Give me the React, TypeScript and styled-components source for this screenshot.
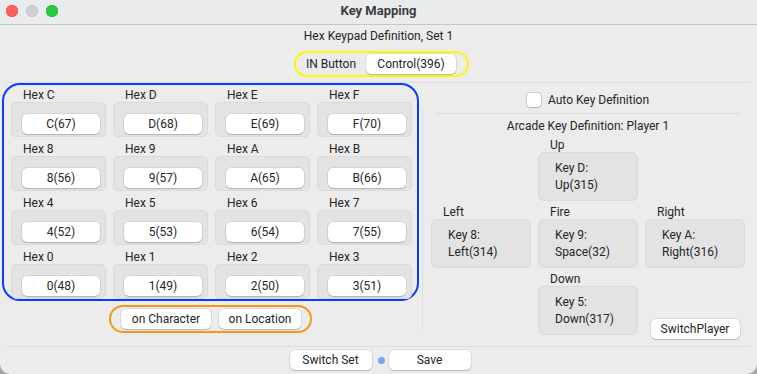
import React from "react";
import styled, { createGlobalStyle } from "styled-components";

const FONT = `Roboto, "Liberation Sans", sans-serif`;

const Global = createGlobalStyle`
  html, body { margin: 0; padding: 0; background: #a3a3a3; }
  body {
    font-family: ${FONT};
    font-size: 12px;
    color: #262626;
  }
  * { box-sizing: border-box; }
`;

const Window = styled.div`
  width: 757px;
  height: 374px;
  background: #ececec;
  display: flex;
  flex-direction: column;
  border-radius: 0 0 10px 10px;
  overflow: hidden;
`;

const TitleBar = styled.div`
  height: 25px;
  flex: none;
  display: grid;
  grid-template-columns: 1fr auto 1fr;
  align-items: center;
  background: #eaebec;
  border-bottom: 1px solid #c6c6c6;
`;

const Lights = styled.div`
  display: flex;
  gap: 8px;
  padding-left: 6px;
  padding-bottom: 3px;
`;

const Light = styled.span<{ $c: string; $b: string }>`
  width: 12px;
  height: 12px;
  border-radius: 50%;
  background: ${(p) => p.$c};
  box-shadow: inset 0 0 0 0.5px ${(p) => p.$b};
`;

const Title = styled.div`
  font-weight: 700;
  font-size: 13px;
  color: #3d3d3d;
  padding-bottom: 3px;
`;

const Header = styled.div`
  margin-top: 4px;
  line-height: 14px;
  text-align: center;
`;

const HeaderRow = styled.div`
  display: flex;
  justify-content: center;
  margin-top: 8px;
  padding-left: 6px;
`;

const Ring = styled.div<{ $color: string; $radius: number }>`
  border: 2px solid ${(p) => p.$color};
  border-radius: ${(p) => p.$radius}px;
`;

const InRing = styled(Ring)`
  height: 26px;
  display: flex;
  align-items: center;
  padding: 0 11px 0 10px;
  gap: 10px;
`;

const Separator = styled.div<{ $ml?: number; $mr?: number }>`
  height: 1px;
  background: #dcdcdc;
  margin-left: ${(p) => p.$ml ?? 0}px;
  margin-right: ${(p) => p.$mr ?? 0}px;
  flex: none;
`;

const TopSep = styled(Separator)`
  margin-top: 5px;
`;

const Button = styled.button<{ $w: number }>`
  all: unset;
  box-sizing: border-box;
  width: ${(p) => p.$w}px;
  height: 20px;
  background: #fff;
  border-radius: 5px;
  box-shadow: 0 0 0 0.5px rgba(0, 0, 0, 0.14), 0 1px 1px rgba(0, 0, 0, 0.16);
  font-family: ${FONT};
  font-size: 12px;
  color: #262626;
  text-align: center;
  line-height: 20px;
  flex: none;
`;

const Main = styled.div`
  flex: 1;
  display: flex;
  align-items: flex-start;
`;

const LeftCol = styled.div`
  padding-left: 2px;
  width: 419px;
  display: flex;
  flex-direction: column;
  align-items: center;
  gap: 4px;
`;

const HexRing = styled(Ring)`
  width: 417px;
  padding: 3px 4px 0 7px;
  display: grid;
  grid-template-columns: repeat(4, 95px);
  column-gap: 7px;
  row-gap: 5px;
`;

const Cell = styled.div<{ $col?: number }>`
  display: flex;
  flex-direction: column;
  grid-column: ${(p) => p.$col ?? "auto"};
`;

const CellLabel = styled.div<{ $indent: number }>`
  line-height: 14px;
  height: 14px;
  padding-left: ${(p) => p.$indent}px;
`;

const HexBox = styled.div`
  height: 35px;
  background: #e3e3e3;
  border: 1px solid #dadada;
  border-radius: 5px;
  display: flex;
  align-items: flex-end;
  padding: 0 5px 2px 10px;
`;

const ModeRing = styled(Ring)`
  display: flex;
  gap: 8px;
  padding: 2px 9px 2px 10px;
`;

const VSep = styled.div`
  width: 1px;
  height: 222px;
  margin: 24px 0 0 3px;
  background: #dcdcdc;
  flex: none;
`;

const RightCol = styled.div`
  margin-left: 8px;
  width: 314px;
  padding-top: 9px;
  display: flex;
  flex-direction: column;
`;

const CheckRow = styled.label`
  height: 16px;
  display: flex;
  align-items: center;
  justify-content: center;
  gap: 7px;
`;

const CheckBox = styled.span`
  width: 14px;
  height: 14px;
  background: #fff;
  border-radius: 3px;
  box-shadow: 0 0 0 0.5px rgba(0, 0, 0, 0.25), 0 0.5px 1px rgba(0, 0, 0, 0.15);
`;

const RightSep = styled(Separator)`
  margin-top: 5px;
`;

const ArcadeTitle = styled.div`
  margin-top: 5px;
  line-height: 14px;
  text-align: center;
`;

const ArcadeGrid = styled.div`
  margin-top: 5px;
  display: grid;
  grid-template-columns: repeat(3, 100px);
  column-gap: 7px;
  row-gap: 4px;
`;

const KeyBox = styled.div`
  height: 49px;
  background: #e3e3e3;
  border: 1px solid #dadada;
  border-radius: 6px;
  padding-left: 16px;
  display: flex;
  flex-direction: column;
  justify-content: center;
  line-height: 17px;
`;

const SwitchCell = styled.div`
  align-self: end;
  justify-self: center;
  margin-bottom: -4px;
`;

const BottomBar = styled.div`
  flex: none;
  display: flex;
  justify-content: center;
  align-items: center;
  padding: 3px 0 4px 3px;
`;

const Dot = styled.span`
  width: 7px;
  height: 7px;
  border-radius: 50%;
  background: #73a8f2;
  margin: 0 4px 0 6px;
`;

const hexRows = [
  [["C", "C(67)"], ["D", "D(68)"], ["E", "E(69)"], ["F", "F(70)"]],
  [["8", "8(56)"], ["9", "9(57)"], ["A", "A(65)"], ["B", "B(66)"]],
  [["4", "4(52)"], ["5", "5(53)"], ["6", "6(54)"], ["7", "7(55)"]],
  [["0", "0(48)"], ["1", "1(49)"], ["2", "2(50)"], ["3", "3(51)"]],
];

const KeyCell = ({ label, line1, line2, col }: { label: string; line1: string; line2: string; col: number }) => (
  <Cell $col={col}>
    <CellLabel $indent={12}>{label}</CellLabel>
    <KeyBox>
      <div>{line1}</div>
      <div>{line2}</div>
    </KeyBox>
  </Cell>
);

export default function App() {
  return (
    <>
      <Global />
      <Window>
        <TitleBar>
          <Lights>
            <Light $c="#ff5f57" $b="#e2463f" />
            <Light $c="#d0d0d2" $b="#bdbdbf" />
            <Light $c="#28c840" $b="#1eab32" />
          </Lights>
          <Title>Key Mapping</Title>
          <div />
        </TitleBar>
        <Header>Hex Keypad Definition, Set 1</Header>
        <HeaderRow>
          <InRing $color="#fff700" $radius={13}>
            <span>IN Button</span>
            <Button $w={90}>Control(396)</Button>
          </InRing>
        </HeaderRow>
        <TopSep $ml={6} $mr={7} />
        <Main>
          <LeftCol>
            <HexRing $color="#0a3cff" $radius={18}>
              {hexRows.flat().map(([h, v]) => (
                <Cell key={h}>
                  <CellLabel $indent={12}>Hex {h}</CellLabel>
                  <HexBox>
                    <Button $w={78}>{v}</Button>
                  </HexBox>
                </Cell>
              ))}
            </HexRing>
            <ModeRing $color="#f7961c" $radius={14}>
              <Button $w={90}>on Character</Button>
              <Button $w={82}>on Location</Button>
            </ModeRing>
          </LeftCol>
          <VSep />
          <RightCol>
            <CheckRow>
              <CheckBox />
              <span>Auto Key Definition</span>
            </CheckRow>
            <RightSep $ml={5} $mr={4} />
            <ArcadeTitle>Arcade Key Definition: Player 1</ArcadeTitle>
            <ArcadeGrid>
              <KeyCell col={2} label="Up" line1="Key D:" line2="Up(315)" />
              <KeyCell col={1} label="Left" line1="Key 8:" line2="Left(314)" />
              <KeyCell col={2} label="Fire" line1="Key 9:" line2="Space(32)" />
              <KeyCell col={3} label="Right" line1="Key A:" line2="Right(316)" />
              <KeyCell col={2} label="Down" line1="Key 5:" line2="Down(317)" />
              <SwitchCell>
                <Button $w={89}>SwitchPlayer</Button>
              </SwitchCell>
            </ArcadeGrid>
          </RightCol>
        </Main>
        <Separator $ml={6} $mr={7} />
        <BottomBar>
          <Button $w={82}>Switch Set</Button>
          <Dot />
          <Button $w={82}>Save</Button>
        </BottomBar>
      </Window>
    </>
  );
}
